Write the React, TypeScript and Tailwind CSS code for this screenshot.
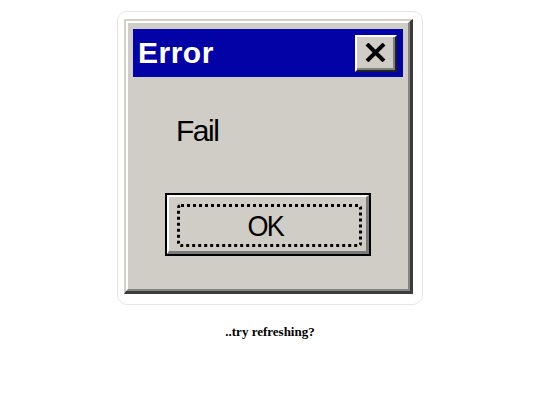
import React from "react";

function CloseGlyph() {
  return (
    <svg width="21" height="19" viewBox="0 0 21 19" aria-hidden="true">
      <path d="M2 1 L19 18 M19 1 L2 18" stroke="#000" strokeWidth="4" strokeLinecap="butt" fill="none" />
    </svg>
  );
}

function TitleButton() {
  return (
    <div className="w-[42px] h-[37px] border-t-2 border-l-2 border-t-white border-l-white border-r-2 border-b-2 border-r-[#202020] border-b-[#202020]">
      <div className="w-full h-full bg-[#d0ccc6] border-r-2 border-b-2 border-r-[#808080] border-b-[#808080] flex items-center justify-center">
        <CloseGlyph />
      </div>
    </div>
  );
}

function OkButton() {
  return (
    <div className="w-[206px] h-[63px] border-2 border-black">
      <div className="w-full h-full bg-[#d0ccc6] border-t-2 border-l-2 border-t-white border-l-white border-r-[3px] border-b-[3px] border-r-[#7a7a7a] border-b-[#7a7a7a] pl-[8px] pt-[7px] pr-[4px] pb-[4px]">
        <div className="w-full h-full border-[3px] border-dotted border-black rounded-[4px] flex items-center justify-center">
          <span className="text-[30px] leading-[30px] text-black tracking-[-2px] pr-[10px] scale-x-[0.9]" style={{ fontFamily: '"Liberation Sans", Arial, sans-serif' }}>
            OK
          </span>
        </div>
      </div>
    </div>
  );
}

export default function App() {
  return (
    <div className="min-h-[405px] bg-white flex flex-col items-center pt-[11px]">
      <div className="w-[306px] h-[294px] rounded-[10px] border border-[#e6e6e6] bg-white pl-[6px] pt-[7px]">
        <div className="w-[289px] h-[275px] border-t-2 border-l-2 border-t-[#d4d0c8] border-l-[#d4d0c8] border-r-[3px] border-b-[3px] border-r-[#3c3c3c] border-b-[#3c3c3c]">
          <div className="w-full h-full bg-[#d0ccc6] border-t-2 border-l-2 border-t-white border-l-white border-r-2 border-b-2 border-r-[#858585] border-b-[#858585] px-[5px] pt-[6px]">
            <div className="h-[48px] bg-[#0202a6] flex items-center justify-between pl-[5px] pr-[6px]">
              <span className="text-white font-bold text-[30px] leading-[30px] tracking-[0.5px]" style={{ fontFamily: '"Liberation Sans", Arial, sans-serif' }}>
                Error
              </span>
              <TitleButton />
            </div>
            <div className="pl-[43px] mt-[39px]">
              <span className="block text-[30px] leading-[30px] text-black tracking-[-1.5px]" style={{ fontFamily: '"Liberation Sans", Arial, sans-serif' }}>
                Fail
              </span>
            </div>
            <div className="pl-[32px] mt-[47px]">
              <OkButton />
            </div>
          </div>
        </div>
      </div>
      <p className="mt-[17px] text-[13px] leading-[20px] font-bold text-black" style={{ fontFamily: '"Liberation Serif", "Times New Roman", serif' }}>
        ..try refreshing?
      </p>
    </div>
  );
}
